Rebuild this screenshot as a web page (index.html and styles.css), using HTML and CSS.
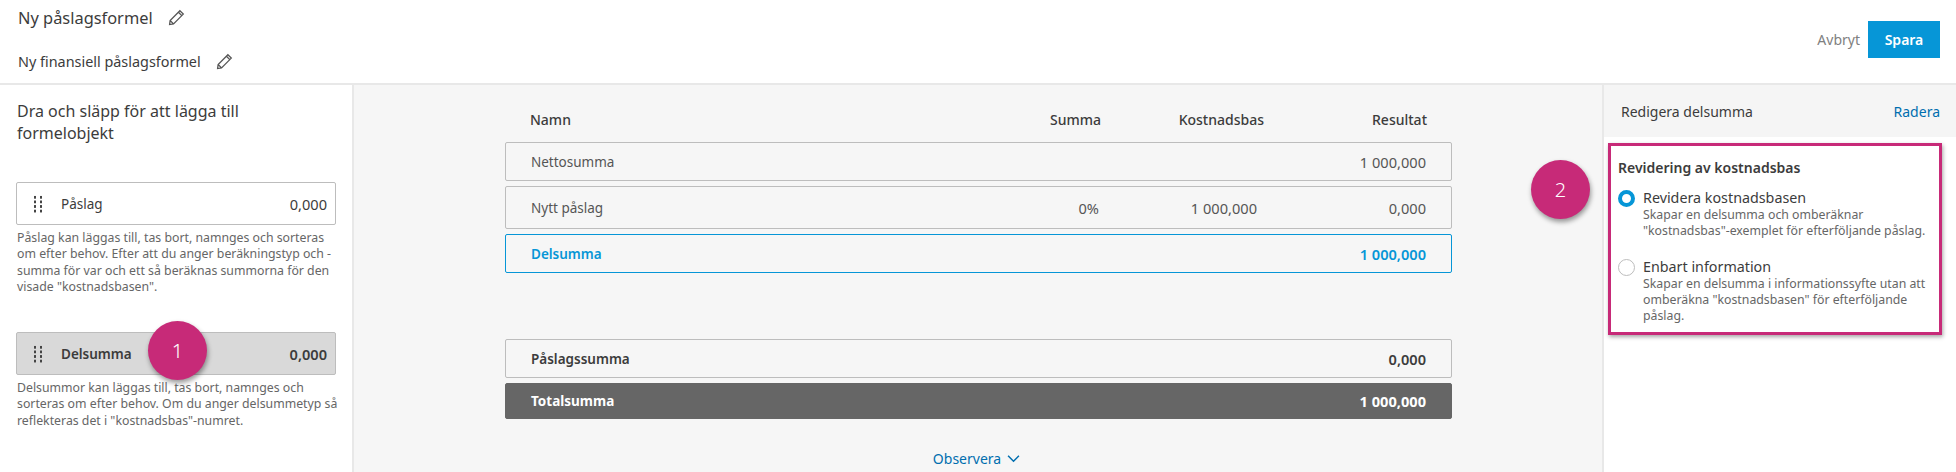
FILE: index.html
```html
<!DOCTYPE html>
<html lang="sv">
<head>
  <meta charset="UTF-8">
  <title>Ny påslagsformel</title>
  <link rel="stylesheet" href="styles.css">
</head>
<body>
  <div class="app">
    <!-- Header -->
    <div class="topbar">
      <div class="titles">
        <div class="title-row title-main">
          <span>Ny påslagsformel</span>
          <svg class="pencil" viewBox="0 0 16 16"><path d="M11.2 1.6 14.4 4.8 5.2 14 1.5 14.6 2 10.8Z M9.8 3 13 6.2 M2 10.8 5.2 14"/></svg>
        </div>
        <div class="title-row title-sub">
          <span>Ny finansiell påslagsformel</span>
          <svg class="pencil" viewBox="0 0 16 16"><path d="M11.2 1.6 14.4 4.8 5.2 14 1.5 14.6 2 10.8Z M9.8 3 13 6.2 M2 10.8 5.2 14"/></svg>
        </div>
      </div>
      <div class="actions">
        <span class="cancel">Avbryt</span>
        <button class="btn-save">Spara</button>
      </div>
    </div>

    <div class="columns">
      <!-- Left panel -->
      <div class="palette">
        <h2 class="palette-title">Dra och släpp för att lägga till formelobjekt</h2>
        <div class="chip">
          <span class="grip"></span>
          <span class="chip-name">Påslag</span>
          <span class="chip-value">0,000</span>
        </div>
        <p class="chip-help">Påslag kan läggas till, tas bort, namnges och sorteras om efter behov. Efter att du anger beräkningstyp och -summa för var och ett så beräknas summorna för den visade "kostnadsbasen".</p>
        <div class="chip chip-active">
          <span class="grip"></span>
          <span class="chip-name">Delsumma</span>
          <span class="chip-value">0,000</span>
        </div>
        <p class="chip-help">Delsummor kan läggas till, tas bort, namnges och sorteras om efter behov. Om du anger delsummetyp så reflekteras det i "kostnadsbas"-numret.</p>
      </div>

      <!-- Formula table -->
      <div class="formula">
        <div class="cols cols-head">
          <span class="col-name">Namn</span>
          <span class="col-sum">Summa</span>
          <span class="col-base">Kostnadsbas</span>
          <span class="col-res">Resultat</span>
        </div>
        <div class="cols line">
          <span class="col-name">Nettosumma</span>
          <span class="col-sum"></span>
          <span class="col-base"></span>
          <span class="col-res">1 000,000</span>
        </div>
        <div class="cols line line-tall">
          <span class="col-name">Nytt påslag</span>
          <span class="col-sum">0%</span>
          <span class="col-base">1 000,000</span>
          <span class="col-res">0,000</span>
        </div>
        <div class="cols line line-selected">
          <span class="col-name">Delsumma</span>
          <span class="col-sum"></span>
          <span class="col-base"></span>
          <span class="col-res">1 000,000</span>
        </div>
        <div class="cols line line-bold line-sum">
          <span class="col-name">Påslagssumma</span>
          <span class="col-sum"></span>
          <span class="col-base"></span>
          <span class="col-res">0,000</span>
        </div>
        <div class="cols line line-total">
          <span class="col-name">Totalsumma</span>
          <span class="col-sum"></span>
          <span class="col-base"></span>
          <span class="col-res">1 000,000</span>
        </div>
        <div class="note">
          <span>Observera</span>
          <svg class="chevron" viewBox="0 0 12 8"><path d="M1 1.5 6 6.5 11 1.5"/></svg>
        </div>
      </div>

      <!-- Right panel -->
      <div class="editor">
        <div class="editor-head">
          <span>Redigera delsumma</span>
          <span class="link">Radera</span>
        </div>
        <div class="callout">
          <div class="callout-title">Revidering av kostnadsbas</div>
          <div class="option">
            <span class="radio radio-on"></span>
            <div>
              <div class="option-name">Revidera kostnadsbasen</div>
              <div class="option-help">Skapar en delsumma och omberäknar<br>"kostnadsbas"-exemplet för efterföljande påslag.</div>
            </div>
          </div>
          <div class="option">
            <span class="radio"></span>
            <div>
              <div class="option-name">Enbart information</div>
              <div class="option-help">Skapar en delsumma i informationssyfte utan att omberäkna "kostnadsbasen" för efterföljande påslag.</div>
            </div>
          </div>
        </div>
      </div>
    </div>

    <!-- Callout markers -->
    <div class="marker marker-1">1</div>
    <div class="marker marker-2">2</div>
  </div>
</body>
</html>
```

FILE: styles.css
```css
* {
  margin: 0;
  padding: 0;
  box-sizing: border-box;
}

body {
  font-family: "Noto Sans", "Open Sans", sans-serif;
  font-size: 14px;
  color: #3c3c3c;
  background: #fff;
  overflow: hidden;
}

.app {
  position: relative;
  width: 1956px;
  height: 472px;
  display: flex;
  flex-direction: column;
  overflow: hidden;
}

.topbar {
  height: 85px;
  flex: none;
  display: flex;
  justify-content: space-between;
  padding: 0 16px 0 18px;
  border-bottom: 2px solid #e8e8e8;
}

.title-row {
  display: flex;
  align-items: center;
}

.title-main {
  height: 34px;
  font-size: 16.4px;
}

.title-main .pencil {
  margin-left: 15px;
}

.title-sub {
  height: 28px;
  margin-top: 13px;
  font-size: 14.4px;
}

.title-sub .pencil {
  margin-left: 15px;
}

.pencil {
  width: 17px;
  height: 17px;
  fill: none;
  stroke: #555;
  stroke-width: 1.2;
}

.actions {
  display: flex;
  align-items: flex-start;
  padding-top: 21px;
}

.cancel {
  line-height: 37px;
  margin-right: 8px;
  color: #808080;
}

.btn-save {
  width: 72px;
  height: 37px;
  border: none;
  background: #0696d7;
  color: #fff;
  font-family: inherit;
  font-size: 14px;
  font-weight: 600;
}

.columns {
  flex: 1;
  display: flex;
  min-height: 0;
}

.palette {
  width: 354px;
  flex: none;
  padding: 15px 16px 0 16px;
  border-right: 2px solid #e8e8e8;
}

.palette-title {
  width: 260px;
  height: 44px;
  margin-bottom: 38px;
  margin-left: 1px;
  font-size: 16px;
  font-weight: 400;
  line-height: 22px;
}

.chip {
  height: 43px;
  display: flex;
  align-items: center;
  padding: 0 8px 0 15px;
  border: 1px solid #bdbdbd;
  border-radius: 2px;
}

.chip-active {
  background: #d9d9d9;
  font-weight: 600;
}

.chip-name {
  flex: 1;
  margin-left: 17px;
  font-size: 13.5px;
}

.chip-value {
  font-size: 14.6px;
}

.grip {
  width: 12px;
  height: 18px;
  background-image: radial-gradient(circle, #444 1.1px, transparent 1.4px);
  background-size: 6px 4.6px;
}

.chip-help {
  width: 322px;
  margin-top: 5px;
  margin-bottom: 37px;
  margin-left: 1px;
  font-size: 12.3px;
  line-height: 16.3px;
  color: #666;
}

.formula {
  flex: 1;
  background: #f6f6f6;
  padding: 0 150px 0 151px;
}

.cols {
  display: flex;
  align-items: center;
}

.cols-head {
  height: 57px;
  padding-top: 12px;
  font-weight: 500;
}

.col-name {
  flex: 1;
  padding-left: 25px;
}

.col-sum {
  width: 100px;
  text-align: right;
}

.col-base {
  width: 163px;
  text-align: right;
}

.col-res {
  width: 188px;
  padding-right: 25px;
  text-align: right;
}

.line {
  height: 39px;
  margin-bottom: 5px;
  border: 1px solid #bdbdbd;
  border-radius: 2px;
  color: #555;
  font-size: 14.6px;
}

.line .col-name {
  font-size: 13.5px;
}

.line .col-sum {
  padding-right: 1px;
}

.line .col-base {
  padding-right: 6px;
}

.line-tall {
  height: 43px;
}

.line-selected {
  border-color: #0696d7;
  color: #0696d7;
  font-weight: 600;
}

.line-bold {
  color: #3c3c3c;
  font-weight: 600;
}

.line-sum {
  margin-top: 66px;
}

.line-total {
  height: 36px;
  border-color: #666;
  background: #666;
  color: #fff;
  font-weight: 700;
}

.note {
  display: flex;
  justify-content: center;
  align-items: center;
  gap: 6px;
  margin-top: 30px;
  padding-right: 4px;
  color: #006eaf;
}

.chevron {
  width: 13px;
  height: 9px;
  fill: none;
  stroke: #006eaf;
  stroke-width: 1.4;
}

.editor {
  width: 354px;
  flex: none;
  border-left: 2px solid #e8e8e8;
}

.editor-head {
  height: 52px;
  display: flex;
  justify-content: space-between;
  align-items: center;
  padding: 1px 16px 0 17px;
  background: #f5f5f5;
}

.link {
  color: #006eaf;
}

.callout {
  width: 334px;
  height: 192px;
  margin: 6px 0 0 4px;
  padding: 12px 4px 0 7px;
  border: 3px solid #c72a78;
  box-shadow: 1px 2px 4px rgba(0, 0, 0, 0.35);
}

.callout-title {
  margin-bottom: 11px;
  font-size: 14px;
  font-weight: 600;
  line-height: 20px;
}

.option {
  display: flex;
  gap: 8px;
  margin-bottom: 18px;
}

.radio {
  width: 17px;
  height: 17px;
  flex: none;
  margin-top: 1px;
  border: 1px solid #bdbdbd;
  border-radius: 50%;
}

.radio-on {
  border: 4px solid #0696d7;
}

.option-name {
  font-size: 14.3px;
  line-height: 18px;
}

.option-help {
  font-size: 12.3px;
  line-height: 16.3px;
  color: #666;
}

.marker {
  position: absolute;
  width: 59px;
  height: 59px;
  display: flex;
  align-items: center;
  justify-content: center;
  border-radius: 50%;
  background: #c72a78;
  color: #fff;
  font-size: 20px;
  font-weight: 300;
  box-shadow: 1px 3px 5px rgba(0, 0, 0, 0.4);
}

.marker-1 {
  left: 148px;
  top: 321px;
}

.marker-2 {
  left: 1531px;
  top: 160px;
}
```
